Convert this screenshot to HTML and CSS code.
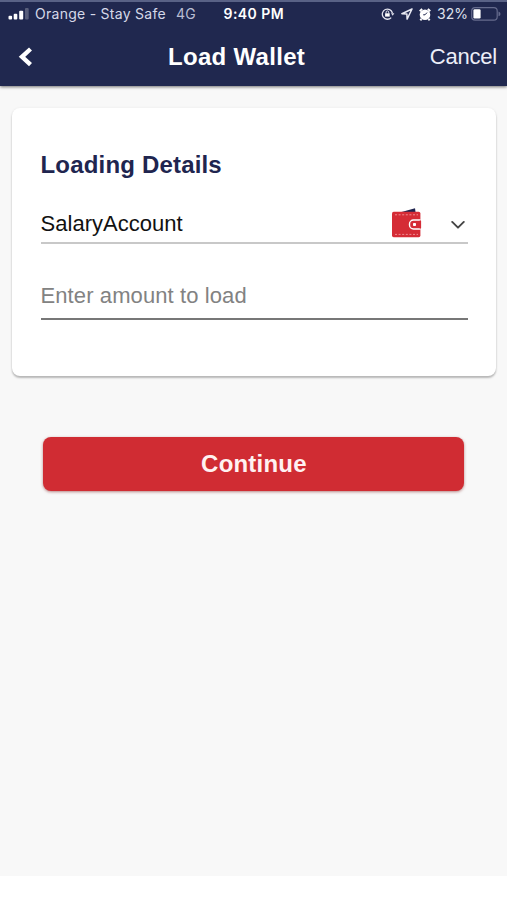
FILE: index.html
```html
<!DOCTYPE html>
<html lang="en">
<head>
<meta charset="utf-8">
<meta name="viewport" content="width=device-width, initial-scale=1">
<title>Load Wallet</title>
<link rel="stylesheet" href="styles.css">
</head>
<body>
<header class="header">
  <div class="status">
    <div class="status-left">
      <svg class="signal" width="21" height="12" viewBox="0 0 21 12" fill="#fff"><rect x=".5" y="7.8" width="3.6" height="3.7" rx="1"/><rect x="5.7" y="5.8" width="3.6" height="5.7" rx="1"/><rect x="11.2" y="2.8" width="4" height="8.7" rx="1"/><rect x="17" y="0" width="3.7" height="11.5" rx="1" opacity=".25"/></svg>
      <span class="carrier">Orange - Stay Safe</span>
      <span class="network">4G</span>
    </div>
    <span class="time">9:40 PM</span>
    <div class="status-right">
      <svg class="lock" width="14" height="12" viewBox="0 0 14 12" fill="none" stroke="#e2e3ee" stroke-width="1.3"><path d="M10.2 9.6A5.1 5.1 0 1 1 11.4 5"/><path d="M10 5.3h3.4l-1.7 2.5z" fill="#e2e3ee" stroke="none"/><rect x="4.1" y="5.3" width="4.6" height="3.3" fill="#fff" stroke="none"/><path d="M5.1 5.7V4.2a1.3 1.3 0 0 1 2.6 0v1.5" stroke-width="1"/></svg>
      <svg class="arrow" width="12" height="12" viewBox="0 0 12 12" fill="none" stroke="#e8e9f3" stroke-width="1.5" stroke-linejoin="round"><path d="M11 1 .9 5.8l5 .3.2 5z"/></svg>
      <svg class="alarm" width="12" height="13" viewBox="0 0 12 13"><path d="M.8 3.2 3.1.9M11.2 3.2 8.9.9M2.5 11l-1.2 1.3M9.5 11l1.2 1.3" stroke="#fff" stroke-width="2"/><circle cx="6" cy="6.8" r="5.3" fill="#fff"/><path d="M8 4.6 6 6.8H4.2" fill="none" stroke="#20284f" stroke-width="1"/></svg>
      <span class="percent">32%</span>
      <svg class="battery" width="30" height="14" viewBox="0 0 30 14"><rect x=".7" y=".7" width="25.5" height="12.4" rx="3.4" fill="none" stroke="#656b8d" stroke-width="1.2"/><rect x="2.4" y="2.3" width="7.2" height="9.2" rx="1.2" fill="#fff"/><path d="M27.5 4.6q2 .6 2 2.3t-2 2.3z" fill="#656b8d"/></svg>
    </div>
  </div>
  <nav class="navbar">
    <svg class="back" width="16" height="20" viewBox="0 0 16 20" fill="none" stroke="#fff" stroke-width="4.4"><path d="M13.5 2 5 9.8l8.5 7.8"/></svg>
    <h1 class="title">Load Wallet</h1>
    <span class="cancel">Cancel</span>
  </nav>
</header>
<main class="content">
  <section class="card">
    <h2 class="heading">Loading Details</h2>
    <div class="field account">
      <span class="account-name">SalaryAccount</span>
      <svg class="wallet" width="31" height="32" viewBox="0 0 31 32"><path d="M6 6.2 24 1.2 24.8 7z" fill="#20254f"/><rect x="1" y="4.8" width="28.4" height="25.4" rx="1.7" fill="#d52c36"/><path d="M4 7.8h23M4 27.4h23" stroke="#ef8b91" stroke-width="1" stroke-dasharray="2 1.6"/><path d="M29.5 13h-7a4 4 0 0 0-4 4v1a4 4 0 0 0 4 4h7" fill="#d52c36" stroke="#fff" stroke-width="1.4"/><path d="M29.3 13.7v7.6" stroke="#d52c36" stroke-width="1.6"/><rect x="22" y="16" width="3" height="3" rx=".8" fill="#fff"/></svg>
      <svg class="chevron" width="14" height="10" viewBox="0 0 14 10" fill="none" stroke="#444" stroke-width="1.9" stroke-linecap="round" stroke-linejoin="round"><path d="m1.2 1.9 5.8 5.8 5.8-5.8"/></svg>
    </div>
    <input class="field amount" type="text" placeholder="Enter amount to load" aria-label="Amount">
  </section>
  <button class="continue" type="button">Continue</button>
</main>
</body>
</html>
```
FILE: styles.css
```css
* { box-sizing: border-box; }
body {
  margin: 0;
  min-height: 900px;
  background: #fff;
  font-family: "Liberation Sans", Arial, sans-serif;
}
.header {
  position: relative;
  height: 86px;
  background: #20284f;
  border-top: 2px solid #596286;
  box-shadow: 0 1px 3px rgba(0, 0, 0, .55);
  color: #fff;
}
.status {
  display: grid;
  grid-template-columns: 223.5px 1fr auto;
  align-items: center;
  height: 24px;
  padding: 0 6px 0 0;
  font: 500 14px/24px Inter, sans-serif;
  white-space: nowrap;
}
.status-left, .status-right { display: flex; align-items: center; }
.status-left { padding-left: 8px; }
.carrier { margin-left: 6px; color: #d5d8e8; font-weight: 400; letter-spacing: .27px; }
.network { margin-left: 10px; color: #b9bdd3; font-weight: 400; letter-spacing: .3px; }
.time { font-weight: 600; letter-spacing: .45px; }
.arrow { margin-left: 6px; }
.alarm { margin-left: 6px; }
.percent { margin: 0 3px 0 6px; color: #dfe1ed; font-weight: 400; }
.navbar {
  display: grid;
  grid-template-columns: 151px auto 1fr;
  align-items: center;
  height: 62px;
  padding: 0 10px 0 17px;
}
.title { margin: 0; font-size: 24px; line-height: 30px; letter-spacing: .3px; }
.cancel { justify-self: end; font-size: 22px; color: #eceef8; letter-spacing: -.2px; }
.back { margin-top: -1px; }
.content {
  height: 790px;
  padding: 22px 11px 0 12px;
  background: #f8f8f8;
}
.card {
  height: 268px;
  padding: 42px 28.5px 0 28.5px;
  background: #fff;
  border-radius: 8px;
  box-shadow: 0 2px 2px rgba(0, 0, 0, .25), 0 0 3px rgba(0, 0, 0, .06);
}
.heading { margin: 0; color: #20254f; font-size: 24px; line-height: 30px; letter-spacing: .18px; }
.field { display: flex; align-items: center; width: 100%; font-size: 22px; }
.account {
  height: 42px;
  margin-top: 22px;
  padding-top: 2px;
  border-bottom: 2px solid #c8c8c8;
  color: #111;
}
.account-name { flex: 1; padding-top: 1px; letter-spacing: .03px; }
.wallet { margin-right: 29px; }
.chevron { margin: 3px 3px 0 0; }
.amount {
  height: 51px;
  margin-top: 25px;
  padding: 5px 0 0;
  border: 0;
  border-bottom: 2px solid #777;
  border-radius: 0;
  outline: 0;
  background: transparent;
  font-family: inherit;
  letter-spacing: .1px;
}
.amount::placeholder { color: #828282; opacity: 1; }
.continue {
  display: block;
  width: 421px;
  height: 54px;
  margin: 61px 0 0 31.4px;
  padding: 0;
  border: 0;
  border-radius: 8px;
  background: #d02c33;
  box-shadow: 0 1px 3px rgba(120, 20, 20, .5);
  color: #fff1f1;
  font: bold 24px/54px "Liberation Sans", Arial, sans-serif;
  letter-spacing: .2px;
}
```
